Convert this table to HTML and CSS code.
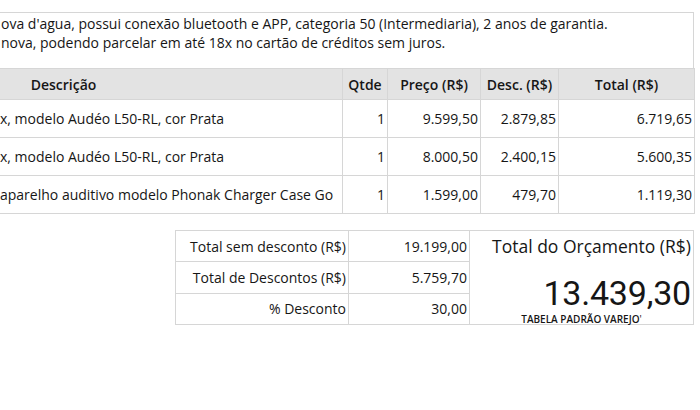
FILE: index.html
```
<!DOCTYPE html>
<html lang="pt-BR">
<head>
<meta charset="utf-8">
<title>Orçamento</title>
<link rel="stylesheet" href="styles.css">
</head>
<body>
<div class="page">
  <div class="note">
    <p>ova d'agua, possui conexão bluetooth e APP, categoria 50 (Intermediaria), 2 anos de garantia.</p>
    <p>nova, podendo parcelar em até 18x no cartão de créditos sem juros.</p>
  </div>
  <table class="items">
    <colgroup>
      <col class="c-desc"><col class="c-qtd"><col class="c-preco"><col class="c-descv"><col class="c-total">
    </colgroup>
    <thead>
      <tr><th>Descrição</th><th>Qtde</th><th>Preço (R$)</th><th>Desc. (R$)</th><th>Total (R$)</th></tr>
    </thead>
    <tbody>
      <tr><td class="desc">x, modelo Audéo L50-RL, cor Prata</td><td class="num">1</td><td class="num">9.599,50</td><td class="num">2.879,85</td><td class="num">6.719,65</td></tr>
      <tr><td class="desc">x, modelo Audéo L50-RL, cor Prata</td><td class="num">1</td><td class="num">8.000,50</td><td class="num">2.400,15</td><td class="num">5.600,35</td></tr>
      <tr><td class="desc">aparelho auditivo modelo Phonak Charger Case Go</td><td class="num">1</td><td class="num">1.599,00</td><td class="num">479,70</td><td class="num">1.119,30</td></tr>
    </tbody>
  </table>
  <div class="summary-wrap">
    <table class="summary">
      <colgroup><col class="s-label"><col class="s-value"><col class="s-total"></colgroup>
      <tr>
        <td class="label">Total sem desconto (R$)</td>
        <td class="value">19.199,00</td>
        <td class="grand" rowspan="3">
          <div class="grand-title">Total do Orçamento (R$)</div>
          <div class="grand-amount">13.439,30</div>
          <div class="grand-note">TABELA PADRÃO VAREJO<span class="tick">'</span></div>
        </td>
      </tr>
      <tr>
        <td class="label">Total de Descontos (R$)</td>
        <td class="value">5.759,70</td>
      </tr>
      <tr>
        <td class="label">% Desconto</td>
        <td class="value">30,00</td>
      </tr>
    </table>
  </div>
</div>
</body>
</html>
```
FILE: styles.css
```
html, body {
  margin: 0;
  padding: 0;
  background: #ffffff;
}
body {
  font-family: "Open Sans", "Noto Sans", "Liberation Sans", sans-serif;
  font-size: 14px;
  font-weight: 500;
  color: #161616;
  overflow: hidden;
}
.page {
  margin-left: -216px;
  width: 910px;
  padding-top: 12px;
}
.note {
  border: 1px solid #d6d6d6;
  border-bottom: none;
  height: 56px;
  box-sizing: border-box;
  padding: 1px 0 0 216px;
}
.note p {
  margin: 0;
  line-height: 19px;
}
.items {
  width: 910px;
  border-collapse: collapse;
  table-layout: fixed;
}
.c-desc { width: 558px; }
.c-qtd { width: 45px; }
.c-preco { width: 93px; }
.c-descv { width: 78px; }
.c-total { width: 136px; }
.items th, .items td {
  border: 1px solid #d6d6d6;
  padding: 0 2px;
  white-space: nowrap;
  overflow: hidden;
}
.items th {
  background: #e3e3e3;
  font-weight: 600;
  height: 30px;
  text-align: center;
}
.items td {
  height: 37px;
}
.items td.desc {
  padding-left: 215px;
}
.num {
  text-align: right;
}
.summary-wrap {
  display: flex;
  justify-content: flex-end;
  margin-top: 16px;
}
.summary {
  width: 518px;
  border-collapse: collapse;
  table-layout: fixed;
}
.s-label { width: 173px; }
.s-value { width: 121px; }
.s-total { width: 224px; }
.summary td {
  border: 1px solid #d6d6d6;
  height: 30px;
  padding: 0 2px;
  white-space: nowrap;
}
.summary .label, .summary .value {
  text-align: right;
}
.summary .grand {
  vertical-align: top;
  padding: 4px 2px 0 0;
  text-align: right;
}
.grand-title {
  font-size: 17.5px;
  font-weight: 500;
  line-height: 22px;
}
.grand-amount {
  font-family: Roboto, "Open Sans", sans-serif;
  font-size: 34px;
  font-weight: 400;
  letter-spacing: -0.2px;
  line-height: 28px;
  margin-top: 22px;
}
.grand-note {
  font-size: 10px;
  font-weight: 600;
  font-stretch: 90%;
  line-height: 10px;
  text-align: center;
  margin-top: 7px;
  padding-left: 2px;
}
.tick {
  font-weight: 400;
}
```
